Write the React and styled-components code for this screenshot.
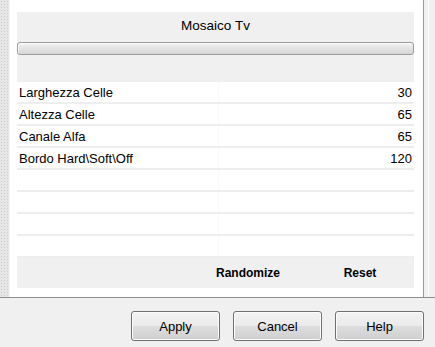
import React from 'react';
import styled, { createGlobalStyle } from 'styled-components';

const GlobalStyle = createGlobalStyle`
    html, body {
        margin: 0;
        padding: 0;
        background: #f0f0f0;
        font-family: "Liberation Sans", Arial, sans-serif;
        color: #000;
    }
`;

// 전체 창
const Window = styled.div`
    width: 435px;
    height: 347px;
    display: flex;
    flex-direction: column;
    background: #f0f0f0;
    overflow: hidden;
`;

// 상단 영역
const TopArea = styled.div`
    height: 297px;
    display: flex;
    border-bottom: 1px solid #8e8e8e;
`;

// 왼쪽 점무늬 띠
const LeftStrip = styled.div`
    width: 9px;
    background-color: #e6e6e6;
    background-image: radial-gradient(#cbcbcb 0.7px, transparent 0.9px);
    background-size: 3px 3px;
    border-right: 1px solid #f6f6f6;
`;

// 오른쪽 띠
const RightStrip = styled.div`
    width: 11px;
    background: #f0f0f0;
    box-sizing: border-box;
    padding-left: 4px;

    &::before {
        content: '';
        display: block;
        width: 1px;
        height: 100%;
        background: #fbfbfb;
    }
`;

// 흰색 패널
const Panel = styled.div`
    flex: 1;
    background: #fff;
    border-right: 1px solid #9a9a9a;
    padding: 12px 9px 0 7px;
    display: flex;
    flex-direction: column;
`;

// 헤더
const Header = styled.div`
    height: 70px;
    background: #f0f0f0;
    display: flex;
    flex-direction: column;
    align-items: stretch;
`;

const Title = styled.div`
    text-align: center;
    font-size: 13.5px;
    line-height: 16px;
    padding-top: 6px;
    height: 24px;
`;

// 슬라이더 바
const SliderBar = styled.div`
    height: 11px;
    border: 1px solid #9c9c9c;
    border-radius: 3px;
    background: linear-gradient(#f4f4f4 0%, #e4e4e4 45%, #d6d6d6 100%);
    box-shadow: inset 1px 1px 0 #fbfbfb;
`;

// 파라미터 목록
const List = styled.div`
    display: flex;
    flex-direction: column;
`;

const Row = styled.div`
    position: relative;
    height: 20px;
    border-bottom: 2px solid #eeeeee;
    display: flex;
    align-items: center;
    justify-content: space-between;
    padding: 0 2px;
    font-size: 13px;

    &::after {
        content: '';
        position: absolute;
        left: 201px;
        top: 0;
        bottom: 0;
        width: 1px;
        background: #f9f9f9;
    }
`;

// 하단 버튼 바
const Footer = styled.div`
    height: 30px;
    background: #f0f0f0;
    display: flex;
    justify-content: flex-end;
    align-items: center;
    gap: 12px;
    padding-right: 4px;
`;

const FooterLink = styled.div`
    width: 100px;
    text-align: center;
    font-size: 12px;
    font-weight: bold;
`;

// 창 버튼
const ButtonBar = styled.div`
    display: flex;
    justify-content: flex-end;
    gap: 13px;
    padding: 13px 11px 0 0;
`;

const DialogButton = styled.button`
    width: 89px;
    height: 30px;
    box-sizing: border-box;
    border: 1px solid #707070;
    border-radius: 3px;
    background: linear-gradient(#f2f2f2 0%, #ebebeb 48%, #dddddd 52%, #cfcfcf 100%);
    box-shadow: inset 0 0 0 1px #fcfcfc;
    font-family: "Liberation Sans", Arial, sans-serif;
    font-size: 13px;
    color: #000;
    padding: 0;
`;

const params = [
    { name: 'Larghezza Celle', value: 30 },
    { name: 'Altezza Celle', value: 65 },
    { name: 'Canale Alfa', value: 65 },
    { name: 'Bordo Hard\\Soft\\Off', value: 120 },
];

const App = () => {
    const emptyRows = Array.from({ length: 4 });

    return (
        <Window>
            <GlobalStyle />
            <TopArea>
                <LeftStrip />
                <Panel>
                    <Header>
                        <Title>Mosaico Tv</Title>
                        <SliderBar />
                    </Header>
                    <List>
                        {params.map((p) => (
                            <Row key={p.name}>
                                <span>{p.name}</span>
                                <span>{p.value}</span>
                            </Row>
                        ))}
                        {emptyRows.map((_, i) => (
                            <Row key={i} />
                        ))}
                    </List>
                    <Footer>
                        <FooterLink>Randomize</FooterLink>
                        <FooterLink>Reset</FooterLink>
                    </Footer>
                </Panel>
                <RightStrip />
            </TopArea>
            <ButtonBar>
                <DialogButton>Apply</DialogButton>
                <DialogButton>Cancel</DialogButton>
                <DialogButton>Help</DialogButton>
            </ButtonBar>
        </Window>
    );
};

export default App;
